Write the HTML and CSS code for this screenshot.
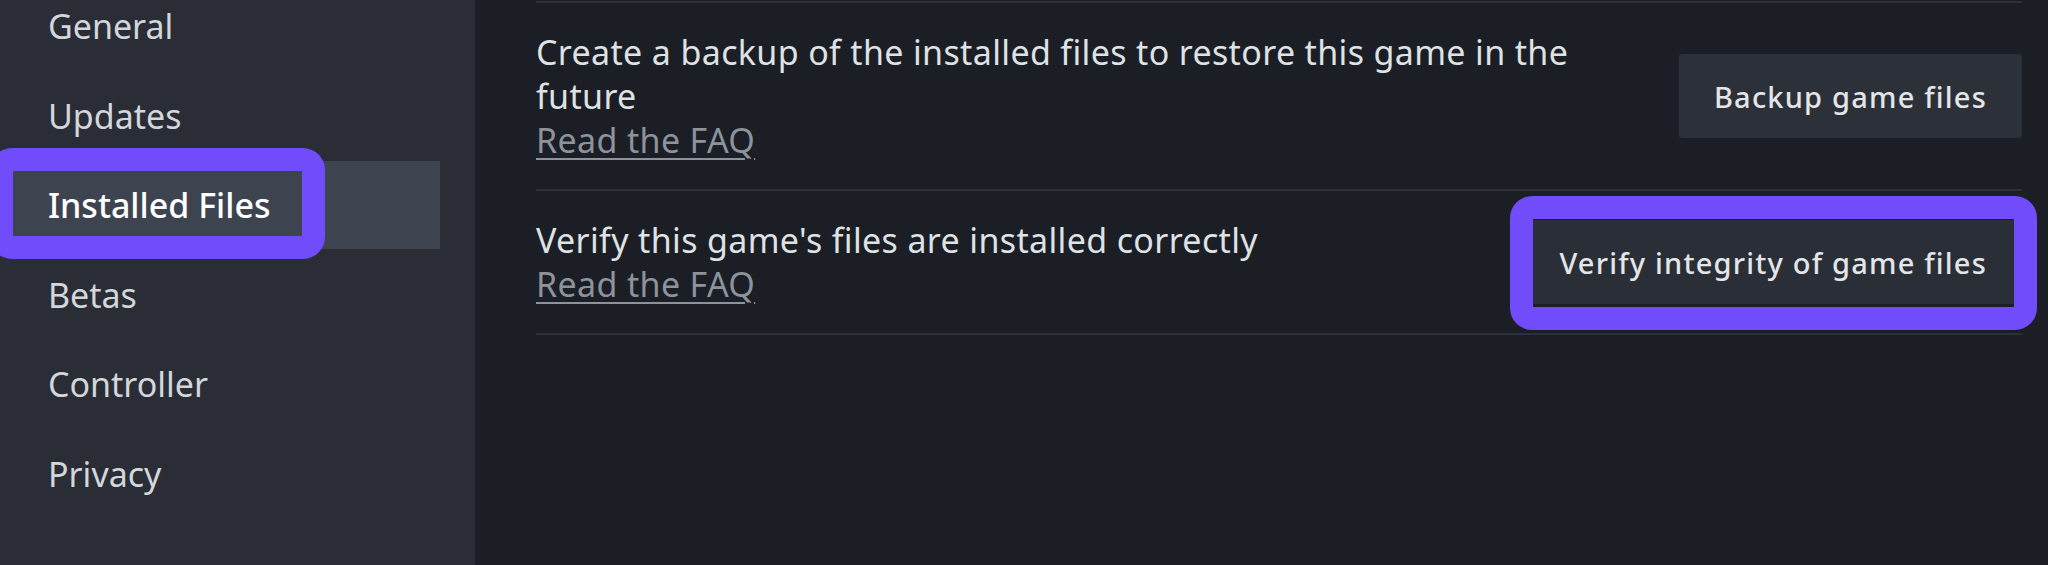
FILE: index.html
```html
<!DOCTYPE html>
<html>
<head>
<meta charset="utf-8">
<link rel="stylesheet" href="styles.css">
</head>
<body>
<div class="app">
  <nav class="sidebar">
    <ul class="nav-list">
      <li class="nav-item">General</li>
      <li class="nav-item">Updates</li>
      <li class="nav-item selected">Installed Files<span class="annot annot-nav"></span></li>
      <li class="nav-item">Betas</li>
      <li class="nav-item">Controller</li>
      <li class="nav-item">Privacy</li>
    </ul>
  </nav>
  <main class="content">
    <section class="row">
      <div class="row-text">
        <p class="desc">Create a backup of the installed files to restore this game in the future</p>
        <a class="faq">Read the FAQ</a>
      </div>
      <button class="btn">Backup game files</button>
    </section>
    <section class="row">
      <div class="row-text">
        <p class="desc">Verify this game's files are installed correctly</p>
        <a class="faq">Read the FAQ</a>
      </div>
      <button class="btn btn-verify">Verify integrity of game files<span class="annot annot-btn"></span></button>
    </section>
  </main>
</div>
</body>
</html>
```
FILE: styles.css
```css
* { box-sizing: border-box; }
html, body {
  margin: 0;
  padding: 0;
  width: 2048px;
  height: 565px;
  overflow: hidden;
  background: #1b1e24;
  font-family: "Noto Sans", "Open Sans", sans-serif;
}
.app {
  display: flex;
  height: 565px;
}
.sidebar {
  width: 475px;
  flex: none;
  background: #2a2d35;
  overflow: hidden;
}
.nav-list {
  list-style: none;
  margin: -18px 0 0 0;
  padding: 0;
  display: flex;
  flex-direction: column;
  gap: 1.5px;
}
.nav-item {
  position: relative;
  height: 88px;
  margin: 0 35px 0 13px;
  padding-left: 35px;
  display: flex;
  align-items: center;
  font-size: 34px;
  color: #d3d6da;
}
.nav-item.selected {
  background: #3d4450;
  color: #ffffff;
  font-weight: 500;
}
.annot {
  position: absolute;
  border: 23px solid #714cfa;
  border-radius: 22px;
  pointer-events: none;
}
.annot-nav {
  left: -23px;
  top: -13px;
  width: 335px;
  height: 111px;
}
.content {
  flex: 1;
  padding: 1px 26px 0 61px;
  display: flex;
  flex-direction: column;
}
.row {
  display: flex;
  align-items: center;
  gap: 60px;
  padding: 27px 0;
  border-top: 2px solid #2c3038;
}
.row:last-child {
  border-bottom: 2px solid #2c3038;
}
.row-text {
  flex: 1;
  display: flex;
  flex-direction: column;
}
.desc {
  margin: 0;
  font-size: 34px;
  line-height: 44px;
  letter-spacing: 0.35px;
  color: #dfe2e5;
}
.faq {
  font-size: 34px;
  line-height: 44px;
  letter-spacing: 0.35px;
  color: #8c939b;
  text-decoration: underline;
  text-decoration-thickness: 2px;
  text-underline-offset: 5px;
  align-self: flex-start;
}
.btn {
  position: relative;
  flex: none;
  height: 84px;
  padding: 0 35px;
  border: none;
  border-radius: 3px;
  background: #2c3038;
  color: #e3e5e8;
  font-family: inherit;
  font-size: 29px;
  font-weight: 500;
  letter-spacing: 1.2px;
}
.btn-verify {
  background: #2a2e36;
}
.annot-btn {
  left: -14px;
  right: -15px;
  top: -24px;
  bottom: -26px;
}
```
